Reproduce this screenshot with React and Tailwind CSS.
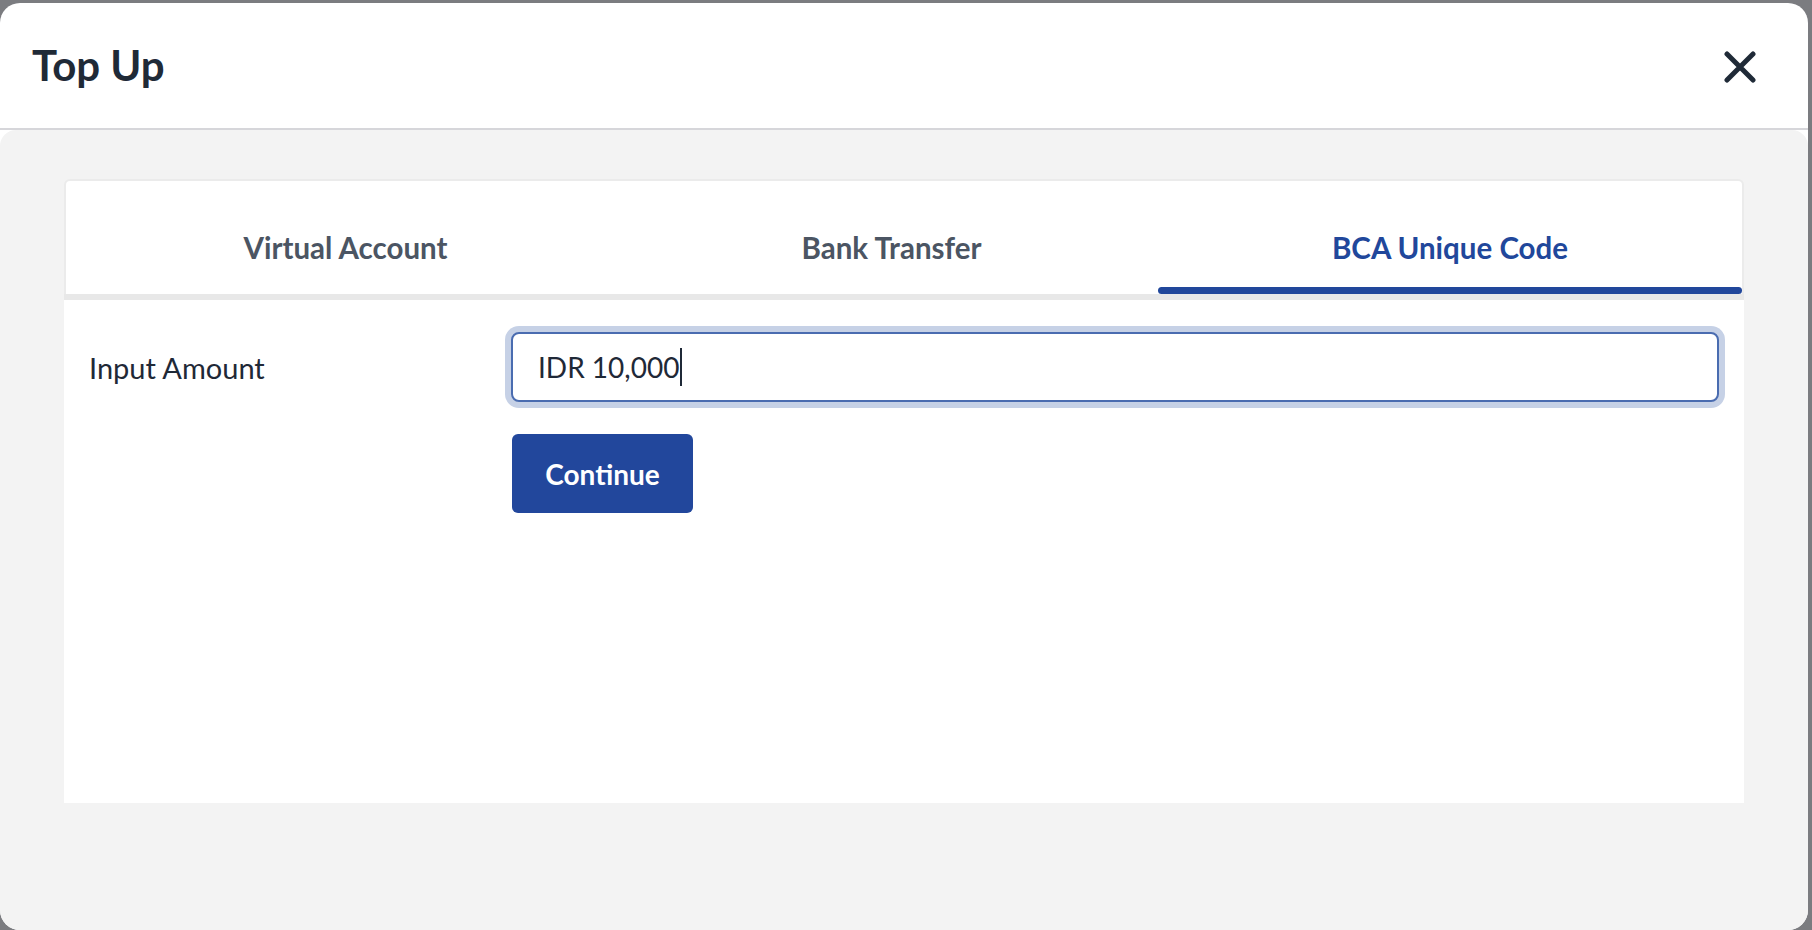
import { useState } from "react";

const tabs = [
  { key: "va", label: "Virtual Account", width: "w-[559px]" },
  { key: "bank", label: "Bank Transfer", width: "w-[533px]" },
  { key: "bca", label: "BCA Unique Code", width: "flex-1" },
];

const CloseIcon = () => (
  <svg width="32" height="32" viewBox="0 0 32 32" fill="none">
    <path d="M3 3L29 29M29 3L3 29" stroke="#1f2a37" strokeWidth="5" strokeLinecap="round" />
  </svg>
);

export default function App() {
  const [active, setActive] = useState("bca");

  return (
    <div className="h-[930px] w-full overflow-hidden bg-[#7b7c80] pt-[3px] font-['Lato',sans-serif]">
      <div className="flex h-[927px] w-[1808px] flex-col overflow-hidden rounded-[20px] bg-white">
        <header className="flex h-[127px] shrink-0 items-center justify-between border-b-2 border-[#d6d6da] pl-[32px] pr-[52px]">
          <h1 className="mb-[2px] text-[42px] font-bold leading-[50px] text-[#1f2a37]">Top Up</h1>
          <button type="button" className="mt-[3px]">
            <CloseIcon />
          </button>
        </header>

        <section className="flex-1 rounded-t-[16px] bg-[#f3f3f3] px-[64px] pt-[49px]">
          <div className="flex h-[115px] rounded-t-[6px] border-2 border-b-0 border-[#ebebeb] bg-white">
            {tabs.map((tab) => (
              <button
                key={tab.key}
                type="button"
                onClick={() => setActive(tab.key)}
                className={`${tab.width} flex flex-col items-center pt-[49px]`}
              >
                <span
                  className={`text-[29.5px] font-bold leading-[35px] ${
                    active === tab.key ? "text-[#21479b]" : "text-[#4b5563]"
                  }`}
                >
                  {tab.label}
                </span>
                <span
                  className={`mt-auto h-[7px] w-full rounded-full ${
                    active === tab.key ? "bg-[#21479b]" : "bg-transparent"
                  }`}
                />
              </button>
            ))}
          </div>
          <div className="h-[6px] bg-[#e8e8e8]" />

          <div className="h-[503px] bg-white px-[25px] pt-[32px]">
            <div className="flex items-center">
              <label className="w-[422px] text-[29px] leading-[35px] text-[#1f2937]">Input Amount</label>
              <div
                role="textbox"
                className="flex h-[70px] flex-1 items-center rounded-[8px] border-2 border-[#4a6cb0] bg-white pl-[25px] text-[28px] text-[#1f2937] shadow-[0_0_0_6px_#c6d1e6]"
              >
                <span>IDR 10,000</span>
                <span className="ml-[1px] h-[38px] w-[2px] bg-[#1f2937]" />
              </div>
            </div>

            <div className="mt-[32px] pl-[423px]">
              <button
                type="button"
                className="h-[79px] w-[181px] rounded-[6px] bg-[#22479c] text-[28px] font-bold text-white"
              >
                Continue
              </button>
            </div>
          </div>
        </section>
      </div>
    </div>
  );
}
